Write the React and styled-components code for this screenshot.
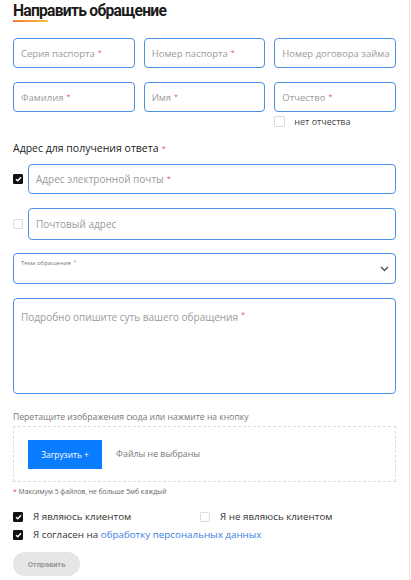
import React from "react";
import styled, { createGlobalStyle } from "styled-components";

const Global = createGlobalStyle`
  html, body { margin: 0; padding: 0; background: #fff; }
  body { font-family: "Open Sans", "Noto Sans", sans-serif; }
  * { box-sizing: border-box; }
`;

const Page = styled.div`
  width: 410px;
  min-height: 580px;
  border-right: 1px solid #e6e6e6;
  padding: 0 13px 2px 13px;
  display: flex;
  flex-direction: column;
`;

const Title = styled.h1`
  margin: 0;
  font-family: "Roboto", "Liberation Sans", sans-serif;
  font-weight: 700;
  font-size: 17px;
  line-height: 20px;
  letter-spacing: -0.8px;
  color: #1b1b1b;
  transform: scaleX(0.92);
  transform-origin: left center;
`;

const TitleBar = styled.div`
  width: 35px;
  height: 2px;
  background: linear-gradient(90deg, #f07a3c, #f6c23a);
  margin-bottom: 16px;
`;

const Grid = styled.div`
  display: grid;
  grid-template-columns: repeat(3, 1fr);
  column-gap: 9px;
  row-gap: 14px;
`;

const Cell = styled.div`
  display: flex;
  flex-direction: column;
`;

const Field = styled.div`
  height: ${(p) => p.$h || 30}px;
  border: 1px solid #4b8ee6;
  border-radius: 4px;
  display: flex;
  align-items: ${(p) => (p.$top ? "flex-start" : "center")};
  padding: ${(p) => (p.$top ? "11px 7px 0" : "0 7px")};
  font-size: ${(p) => p.$fs || 9.5}px;
  color: #9b9b9b;
  white-space: nowrap;
  overflow: hidden;
  flex: 1;
  position: relative;
`;

const Star = styled.span`
  color: #ee5a5a;
  margin-left: 3px;
  font-size: 0.75em;
  position: relative;
  top: -1px;
`;

const Box = styled.span`
  flex: none;
  width: 10px;
  height: 10px;
  border-radius: 1px;
  background: ${(p) => (p.$on ? "#111" : "#fff")};
  border: 1px solid ${(p) => (p.$on ? "#111" : "#dcdcdc")};
  display: inline-flex;
  align-items: center;
  justify-content: center;
`;

const Tick = () => (
  <svg width="7" height="6" viewBox="0 0 7 6">
    <path d="M1 3.2 L2.8 4.8 L6 1.2" fill="none" stroke="#fff" strokeWidth="1.4" />
  </svg>
);

const Check = ({ on }) => <Box $on={on}>{on && <Tick />}</Box>;

const SmallCheck = styled.label`
  display: flex;
  align-items: center;
  gap: 9px;
  margin-top: 3px;
  font-size: 9px;
  color: #444;
  & > span:first-child { width: 11px; height: 11px; }
`;

const Section = styled.div`
  margin-top: 13px;
  font-size: 10.5px;
  font-weight: 500;
  color: #222;
  line-height: 14px;
`;

const Row = styled.div`
  display: flex;
  align-items: center;
  gap: 5px;
  margin-top: ${(p) => p.$mt || 0}px;
`;

const Chevron = styled.svg`
  position: absolute;
  right: 6px;
  top: 12px;
`;

const Tiny = styled.span`
  position: absolute;
  left: 7px;
  top: 5px;
  font-size: 6px;
  color: #777;
`;

const Hint = styled.div`
  margin-top: 17px;
  font-size: 8.6px;
  color: #777;
  line-height: 12px;
`;

const Drop = styled.div`
  margin-top: 3px;
  height: 56px;
  border: 1px dashed #dedede;
  display: flex;
  align-items: center;
  padding: 0 14px;
  gap: 14px;
  font-size: 8.8px;
  color: #777;
`;

const Upload = styled.button`
  width: 74px;
  height: 29px;
  border: 0;
  background: #0a7cff;
  color: #fff;
  font-family: inherit;
  font-size: 8.4px;
  padding: 0;
`;

const Note = styled.div`
  margin-top: 5px;
  font-size: 6.8px;
  color: #666;
  line-height: 10px;
  & > b { color: #e5484d; font-weight: 400; }
`;

const Agree = styled.div`
  margin-top: 15px;
  display: grid;
  grid-template-columns: 187px 1fr;
  row-gap: 8px;
`;

const Opt = styled.label`
  display: flex;
  align-items: center;
  gap: 10px;
  font-size: 9.8px;
  color: #333;
  line-height: 10px;
  grid-column: ${(p) => (p.$wide ? "1 / -1" : "auto")};
`;

const Link = styled.a`
  color: #3d7de4;
  text-decoration: none;
`;

const Submit = styled.button`
  margin-top: 12px;
  align-self: flex-start;
  width: 67px;
  height: 24px;
  border: 0;
  border-radius: 12px;
  background: #e6e6e6;
  color: #9a9a9a;
  font-family: "Roboto", "Liberation Sans", sans-serif;
  font-weight: 700;
  font-size: 7.6px;
  letter-spacing: -0.1px;
  padding: 0;
`;

export default function App() {
  return (
    <Page>
      <Global />
      <Title>Направить обращение</Title>
      <TitleBar />
      <Grid>
        <Field>Серия паспорта<Star>*</Star></Field>
        <Field>Номер паспорта<Star>*</Star></Field>
        <Field>Номер договора займа</Field>
        <Field>Фамилия<Star>*</Star></Field>
        <Field>Имя<Star>*</Star></Field>
        <Cell>
          <Field>Отчество<Star>*</Star></Field>
        </Cell>
      </Grid>
      <Grid>
        <span />
        <span />
        <SmallCheck>
          <Check on={false} />
          нет отчества
        </SmallCheck>
      </Grid>
      <Section>
        Адрес для получения ответа<Star>*</Star>
      </Section>
      <Row $mt={8}>
        <Check on />
        <Field $fs={10}>Адрес электронной почты<Star>*</Star></Field>
      </Row>
      <Row $mt={14}>
        <Check on={false} />
        <Field $h={32} $fs={10}>Почтовый адрес</Field>
      </Row>
      <Row $mt={13}>
        <Field $h={31}>
          <Tiny>Тема обращения<Star>*</Star></Tiny>
          <Chevron width="9" height="6" viewBox="0 0 9 6">
            <path d="M1 1 L4.5 4.5 L8 1" fill="none" stroke="#555" strokeWidth="1.5" />
          </Chevron>
        </Field>
      </Row>
      <Row $mt={14}>
        <Field $h={96} $top $fs={10}>
          Подробно опишите суть вашего обращения<Star>*</Star>
        </Field>
      </Row>
      <Hint>Перетащите изображения сюда или нажмите на кнопку</Hint>
      <Drop>
        <Upload>Загрузить +</Upload>
        Файлы не выбраны
      </Drop>
      <Note><b>*</b> Максимум 5 файлов, не больше 5мб каждый</Note>
      <Agree>
        <Opt><Check on />Я являюсь клиентом</Opt>
        <Opt><Check on={false} />Я не являюсь клиентом</Opt>
        <Opt $wide>
          <Check on />
          <span>Я согласен на <Link href="#">обработку персональных данных</Link></span>
        </Opt>
      </Agree>
      <Submit>Отправить</Submit>
    </Page>
  );
}
